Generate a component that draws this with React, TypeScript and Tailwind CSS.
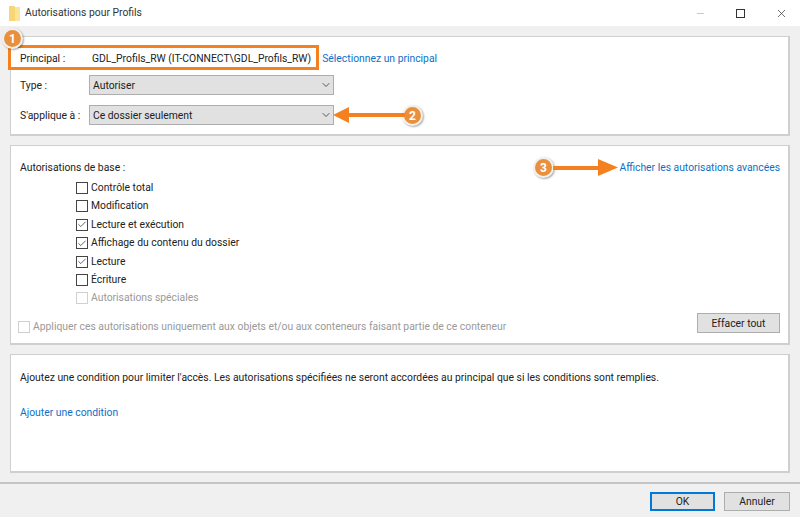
import { ChevronDown, Check, Minus, X } from "lucide-react";

const PERMS = [
  { label: "Contrôle total", checked: false },
  { label: "Modification", checked: false },
  { label: "Lecture et exécution", checked: true },
  { label: "Affichage du contenu du dossier", checked: true },
  { label: "Lecture", checked: true },
  { label: "Écriture", checked: false },
  { label: "Autorisations spéciales", checked: false, disabled: true },
];

function Box({ checked, disabled }: { checked?: boolean; disabled?: boolean }) {
  return (
    <span
      className={`flex h-[12px] w-[12px] shrink-0 items-center justify-center border bg-white ${
        disabled ? "border-[#d0d0d0]" : "border-[#444]"
      }`}
    >
      {checked && <Check size={11} strokeWidth={1.8} className="text-[#333]" />}
    </span>
  );
}

function Select({ value }: { value: string }) {
  return (
    <div className="flex h-[20px] w-[245px] items-center justify-between border border-[#adadad] bg-[#e1e1e1] pl-[3px] pr-[1px] text-[#222]">
      <span className="pt-[2px]">{value}</span>
      <ChevronDown size={12} className="text-[#555]" />
    </div>
  );
}

function Badge({ n, className }: { n: number; className: string }) {
  return (
    <div
      className={`absolute flex h-[21px] w-[21px] items-center justify-center rounded-full border-2 border-[#f4f1ec] bg-[#e9903f] text-[12px] font-bold text-white shadow-[1px_1px_2px_rgba(0,0,0,0.35)] ${className}`}
    >
      {n}
    </div>
  );
}

export default function App() {
  return (
    <div className="relative flex h-[517px] w-[800px] flex-col overflow-hidden bg-[#f0f0f0] font-['Roboto',sans-serif] text-[10.35px] leading-[16px] text-[#222]">
      <div className="flex h-[26px] shrink-0 items-center justify-between bg-white pl-[9px] pr-[12px]">
        <div className="flex items-center gap-[5px]">
          <svg width="11" height="15" viewBox="0 0 11 15">
            <path d="M0 0h5l1 1h5v14H0z" fill="#fce39a" />
            <path d="M0 0h5l1 1v14H0z" fill="#f8d678" />
          </svg>
          <span className="text-[#333]">Autorisations pour Profils</span>
        </div>
        <div className="flex items-center gap-[30px] text-[#333]">
          <Minus size={11} className="text-[#c4c4c4]" />
          <span className="h-[9px] w-[9px] border-[1.5px] border-[#333]" />
          <X size={13} strokeWidth={1.3} />
        </div>
      </div>

      <div className="flex flex-1 flex-col gap-[9px] px-[10px] pt-[10px]">
        <section className="h-[100px] border-2 border-t border-l border-[#cfcfcf] bg-white pl-[9px] pt-[14px]">
          <div className="flex h-[16px] items-center">
            <span className="w-[72px]">Principal :</span>
            <span>GDL_Profils_RW (IT-CONNECT\GDL_Profils_RW)</span>
            <span className="ml-[11px] text-[#0f6fc6]">Sélectionnez un principal</span>
          </div>
          <div className="mt-[8px] flex items-center">
            <span className="w-[69px] pt-[2px]">Type :</span>
            <Select value="Autoriser" />
          </div>
          <div className="mt-[10px] flex items-center">
            <span className="w-[69px] pt-[2px]">S'applique à :</span>
            <Select value="Ce dossier seulement" />
          </div>
        </section>

        <section className="flex h-[200px] flex-col border-2 border-t border-l border-[#cfcfcf] bg-white pl-[9px] pt-[14px]">
          <div className="flex items-center justify-between pr-[8px]">
            <span>Autorisations de base :</span>
            <span className="text-[#0f6fc6]">Afficher les autorisations avancées</span>
          </div>
          <div className="ml-[56px] mt-[4px] flex flex-col gap-[2.4px]">
            {PERMS.map((p) => (
              <div key={p.label} className="flex items-center gap-[3px]">
                <Box checked={p.checked} disabled={p.disabled} />
                <span className={p.disabled ? "text-[#9a9a9a]" : ""}>{p.label}</span>
              </div>
            ))}
          </div>
          <div className="mt-[7px] flex items-end justify-between pr-[8px]">
            <div className="-mb-[2px] -ml-[2px] flex items-center gap-[3px] text-[#9a9a9a]">
              <Box disabled />
              <span>Appliquer ces autorisations uniquement aux objets et/ou aux conteneurs faisant partie de ce conteneur</span>
            </div>
            <div className="flex h-[20px] w-[83px] items-center justify-center border border-[#adadad] bg-[#e1e1e1] pt-[2px]">
              Effacer tout
            </div>
          </div>
        </section>

        <section className="h-[119px] border-2 border-t border-l border-[#cfcfcf] bg-white pl-[9px] pt-[15px]">
          <p>
            Ajoutez une condition pour limiter l'accès. Les autorisations spécifiées ne seront accordées au principal que si les conditions sont remplies.
          </p>
          <p className="mt-[19px] text-[#0f6fc6]">Ajouter une condition</p>
        </section>

        <div className="-mx-[10px] flex flex-1 items-start justify-end gap-[9px] border-t-2 border-[#c4c4c4] pr-[10px] pt-[8px]">
          <div className="flex h-[19px] w-[65px] items-center justify-center border-2 border-[#0078d7] bg-[#e1e1e1]">OK</div>
          <div className="flex h-[19px] w-[66px] items-center justify-center border border-[#adadad] bg-[#e1e1e1]">Annuler</div>
        </div>
      </div>

      {/* annotations par-dessus la fenêtre */}
      <div className="absolute left-[8px] top-[45px] h-[25px] w-[311px] border-[3px] border-[#f5801f]" />
      <Badge n={1} className="left-[2px] top-[28px]" />
      <Badge n={2} className="left-[402px] top-[105px]" />
      <Badge n={3} className="left-[533px] top-[157px]" />
      <svg className="absolute left-[333px] top-[105px]" width="72" height="20" viewBox="0 0 72 20">
        <path d="M0 10L16 2V8H72V12H16V18Z" fill="#f5801f" />
      </svg>
      <svg className="absolute left-[553px] top-[158px]" width="66" height="20" viewBox="0 0 66 20">
        <path d="M0 8H45V1L65 9.500L45 18V12H0Z" fill="#f5801f" />
      </svg>
    </div>
  );
}
